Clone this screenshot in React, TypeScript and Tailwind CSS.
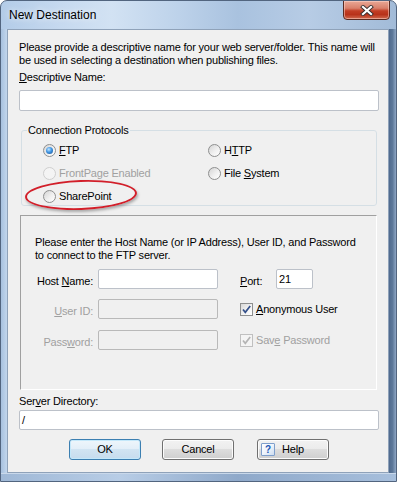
import React from "react";

const disabledText = "text-[#a0a0a0]";

function Radio({
  checked,
  disabled,
  children,
}: {
  checked?: boolean;
  disabled?: boolean;
  children: React.ReactNode;
}) {
  return (
    <div className="flex items-center h-[16px]">
      <span
        className={
          "w-[13px] h-[13px] rounded-full border flex items-center justify-center " +
          (disabled
            ? "border-[#cfcfcf] bg-[#f4f4f4]"
            : "border-[#8e8f8f] bg-[linear-gradient(135deg,#d4d4d4_0%,#f0f0f0_55%,#ffffff_100%)]")
        }
      >
        {checked && (
          <span className="w-[7px] h-[7px] rounded-full bg-[radial-gradient(circle_at_40%_35%,#c2e6ff_0%,#3f95e3_45%,#1b4d8a_100%)]" />
        )}
      </span>
      <span className={"ml-[3px] whitespace-nowrap " + (disabled ? disabledText : "")}>{children}</span>
    </div>
  );
}

function Check({ disabled, children }: { disabled?: boolean; children: React.ReactNode }) {
  return (
    <div className="flex items-center h-[20px]">
      <span
        className={
          "w-[13px] h-[13px] border flex items-center justify-center " +
          (disabled
            ? "border-[#c0c0c0] bg-[#f4f4f4]"
            : "border-[#8e8f8f] bg-[linear-gradient(135deg,#d8d8d8_0%,#f2f2f2_55%,#ffffff_100%)]")
        }
      >
        <svg width="11" height="11" viewBox="0 0 11 11">
          <path
            d="M2 5.5 L4.3 8.3 L9.2 2"
            fill="none"
            stroke={disabled ? "#b4b4b4" : "#34508a"}
            strokeWidth="1.7"
          />
        </svg>
      </span>
      <span className={"ml-[3px] whitespace-nowrap " + (disabled ? disabledText : "")}>{children}</span>
    </div>
  );
}

const inputEnabled = "bg-white border border-[#bcc1c9] rounded-[2px]";
const inputDisabled = "bg-[#f0f0f0] border border-[#b9b9b9] rounded-[2px]";

export default function App() {
  return (
    <div className="w-[397px] h-[482px] flex flex-col rounded-t-[7px] border border-[#52657f] bg-[linear-gradient(90deg,#b3cce8_0%,#c6d9ef_15%,#d2e2f3_28%,#bdd2ea_45%,#a9c2df_60%,#b7cce5_78%,#a2bbd8_100%)] font-['Liberation_Sans',Arial,sans-serif] text-[11px] leading-[13px] tracking-[-0.2px] text-black overflow-hidden">
      {/* title bar */}
      <div className="h-[28px] flex items-start shrink-0">
        <span className="ml-[8px] mt-[7px] text-[12px] tracking-[0px] leading-[14px] [text-shadow:0_0_6px_#ffffff]">
          New Destination
        </span>
        <div className="ml-auto mr-[6px] -mt-px w-[47px] h-[20px] rounded-b-[4px] border border-[#5a2b22] bg-[linear-gradient(180deg,#e9a896_0%,#d9806b_40%,#c23e25_55%,#b8321a_75%,#d06a4f_100%)] shadow-[inset_0_0_0_1px_rgba(255,220,210,0.5)] flex items-center justify-center">
          <svg width="14" height="11" viewBox="0 0 14 11">
            <path d="M3 2 L11 9 M11 2 L3 9" stroke="#3a3030" strokeWidth="4" strokeLinecap="square" />
            <path d="M3 2 L11 9 M11 2 L3 9" stroke="#ffffff" strokeWidth="2.2" strokeLinecap="square" />
          </svg>
        </div>
      </div>

      {/* body */}
      <div className="flex flex-1 min-h-0">
        <div className="w-[6px] bg-[linear-gradient(90deg,#a7c1df,#c2d6ec)]" />
        <div className="w-[382px] border border-[#8fa2b9] bg-[#f0f0f0] flex flex-col pl-[11px] pr-[9px]">
          <p className="mt-[11px] whitespace-nowrap">
            Please provide a descriptive name for your web server/folder. This name will
            <br />
            be used in selecting a destination when publishing files.
          </p>
          <div className="mt-[4px]">
            <u>D</u>escriptive Name:
          </div>
          <div className={"mt-[6px] h-[21px] " + inputEnabled} />

          <fieldset className="mt-[13px] mx-[2px] border border-[#d5dfe5] rounded-[3px] pt-[5px] pb-[1px]">
            <legend className="ml-[5px] px-[1px]">Connection Protocols</legend>
            <div className="grid grid-cols-[165px_1fr] gap-y-[7px] pl-[21px]">
              <Radio checked>
                <u>F</u>TP
              </Radio>
              <Radio>
                H<u>T</u>TP
              </Radio>
              <Radio disabled>FrontPage Enabled</Radio>
              <Radio>
                File <u>S</u>ystem
              </Radio>
              <div className="relative">
                <Radio>SharePoint</Radio>
                <div className="absolute left-[-18px] top-[-8px] w-[112px] h-[30px] rounded-[50%] border-2 border-[#d21f2a] shadow-[1px_2px_3px_rgba(0,0,0,0.3)] -rotate-[2deg]" />
              </div>
              <div />
            </div>
          </fieldset>

          <div className="mt-[9px] ml-[1px] mr-[2px] border border-[#a0a0a0] border-r-white border-b-white pl-[14px] pt-[20px] pb-[39px]">
            <p className="whitespace-nowrap">
              Please enter the Host Name (or IP Address), User ID, and Password
              <br />
              to connect to the FTP server.
            </p>
            <div className="mt-[7px] flex items-center h-[20px]">
              <span className="w-[58px] text-right mt-[5px] whitespace-nowrap">
                Host <u>N</u>ame:
              </span>
              <div className={"ml-[5px] w-[120px] h-[20px] " + inputEnabled} />
              <span className="ml-[22px] w-[36px] mt-[5px]">
                <u>P</u>ort:
              </span>
              <div className={"w-[37px] h-[20px] pl-[2px] flex items-center " + inputEnabled}>21</div>
            </div>
            <div className="mt-[10px] flex items-center h-[20px]">
              <span className={"w-[58px] text-right mt-[5px] whitespace-nowrap " + disabledText}>
                <u>U</u>ser ID:
              </span>
              <div className={"ml-[5px] w-[120px] h-[20px] " + inputDisabled} />
              <div className="ml-[22px]">
                <Check>
                  <u>A</u>nonymous User
                </Check>
              </div>
            </div>
            <div className="mt-[11px] flex items-center h-[20px]">
              <span className={"w-[58px] text-right mt-[5px] whitespace-nowrap " + disabledText}>
                Pass<u>w</u>ord:
              </span>
              <div className={"ml-[5px] w-[120px] h-[20px] " + inputDisabled} />
              <div className="ml-[22px]">
                <Check disabled>
                  Sav<u>e</u> Password
                </Check>
              </div>
            </div>
          </div>

          <div className="mt-[5px]">
            Ser<u>v</u>er Directory:
          </div>
          <div className={"mt-[2px] h-[20px] pl-[2px] flex items-center " + inputEnabled}>/</div>

          <div className="mt-[9px] flex">
            <div className="ml-[50px] w-[72px] h-[21px] rounded-[3px] border border-[#3c7fb1] bg-[linear-gradient(180deg,#eef6fb_0%,#e2eef8_50%,#d1e4f2_50%,#c6dcee_100%)] shadow-[inset_0_0_0_1px_#c4e8fa] flex items-center justify-center">
              OK
            </div>
            <div className="ml-[21px] w-[72px] h-[21px] rounded-[3px] border border-[#707070] bg-[linear-gradient(180deg,#f2f2f2_0%,#ebebeb_50%,#dddddd_50%,#cfcfcf_100%)] shadow-[inset_0_0_0_1px_#fcfcfc] flex items-center justify-center">
              Cancel
            </div>
            <div className="ml-[23px] w-[72px] h-[21px] rounded-[3px] border border-[#707070] bg-[linear-gradient(180deg,#f2f2f2_0%,#ebebeb_50%,#dddddd_50%,#cfcfcf_100%)] shadow-[inset_0_0_0_1px_#fcfcfc] flex items-center pl-[3px]">
              <span className="w-[14px] h-[13px] rounded-[1px] border border-[#7f9fcc] bg-[linear-gradient(135deg,#ffffff_0%,#eef4fb_50%,#cddcef_100%)] flex items-center justify-center text-[10px] font-bold leading-[10px] text-[#1d56b5] tracking-[0px]">
                ?
              </span>
              <span className="ml-[7px]">Help</span>
            </div>
          </div>
        </div>
        <div className="flex-1 bg-[linear-gradient(90deg,#4f6a8e_0%,#5d7899_50%,#8ea6c4_100%)]" />
      </div>
      <div className="h-[8px] shrink-0 bg-[linear-gradient(90deg,#9fb8d6_0%,#b8cde6_30%,#8fa9ca_60%,#a7bfdc_100%)] border-t border-[#c9d8ea]" />
    </div>
  );
}
